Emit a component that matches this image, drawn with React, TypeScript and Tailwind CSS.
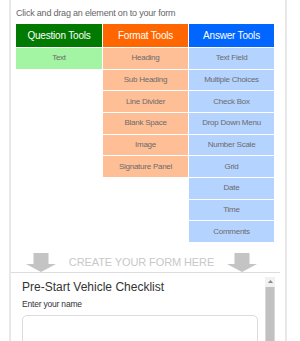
import React from "react";

const question = ["Text"];
const format = ["Heading", "Sub Heading", "Line Divider", "Blank Space", "Image", "Signature Panel"];
const answer = ["Text Field", "Multiple Choices", "Check Box", "Drop Down Menu", "Number Scale", "Grid", "Date", "Time", "Comments"];

function Column({ title, head, cell, items, w }: { title: string; head: string; cell: string; items: string[]; w: string }) {
  return (
    <div className={`flex flex-col gap-px ${w}`}>
      <div className={`h-[23px] flex items-center justify-center text-white text-[10px] tracking-[-0.2px] ${head}`}>{title}</div>
      {items.map((t) => (
        <div key={t} className={`h-[20.67px] flex items-center justify-center text-[8px] tracking-[-0.25px] text-[#6b6b6b] ${cell}`}>
          {t}
        </div>
      ))}
    </div>
  );
}

function Arrow() {
  return (
    <svg width="30" height="19" viewBox="0 0 30 19" className="block">
      <rect x="7.5" y="0" width="15" height="11" fill="#c4c4c4" />
      <polygon points="0,11 30,11 15,19" fill="#c4c4c4" />
    </svg>
  );
}

export default function App() {
  return (
    <div className="w-[300px] h-[341px] overflow-hidden bg-white" style={{ fontFamily: '"Liberation Sans", Arial, sans-serif' }}>
      <div className="ml-[9px] w-[278px] h-[341px] border-x-2 border-[#e8e8e8] flex flex-col">
        <div className="pl-[5px] pt-[7px] text-[9px] leading-[12px] tracking-[-0.2px] text-[#666] mb-[5px]">Click and drag an element on to your form</div>
        <div className="pl-[5px] flex gap-px items-start">
          <Column title="Question Tools" head="bg-[#007a00]" cell="bg-[#a3f5a3]" items={question} w="w-[86px]" />
          <Column title="Format Tools" head="bg-[#ff6600]" cell="bg-[#ffbf96]" items={format} w="w-[85px]" />
          <Column title="Answer Tools" head="bg-[#0066ff]" cell="bg-[#b5d3ff]" items={answer} w="w-[85px]" />
        </div>
        <div className="mr-[5px] h-[31px] border-b border-[#dcdcdc] flex items-end justify-between pl-[15px] pr-[23px]">
          <Arrow />
          <div className="mb-[4px] text-[11px] leading-[12px] text-[#c8c8c8] tracking-[-0.1px]">CREATE YOUR FORM HERE</div>
          <Arrow />
        </div>
        <div className="flex flex-1 min-h-0">
          <div className="flex-1 pl-[11px] pt-[6px]">
            <div className="text-[12px] leading-[16px] text-[#333]">Pre-Start Vehicle Checklist</div>
            <div className="mt-[4px] text-[8.5px] leading-[11px] tracking-[-0.2px] text-[#333]">Enter your name</div>
            <div className="mt-[5px] w-[236px] h-[40px] border border-[#dcdcdc] rounded-[5px]"></div>
          </div>
          <div className="w-[10px] mt-[4px] mr-[10px] flex flex-col">
            <div className="h-[10px] bg-[#f1f1f1] flex items-center justify-center">
              <svg width="5" height="3" viewBox="0 0 5 3"><polygon points="0,3 5,3 2.5,0" fill="#888" /></svg>
            </div>
            <div className="flex-1 bg-[#c1c1c1] border-x border-[#d8d8d8]"></div>
          </div>
        </div>
      </div>
    </div>
  );
}
